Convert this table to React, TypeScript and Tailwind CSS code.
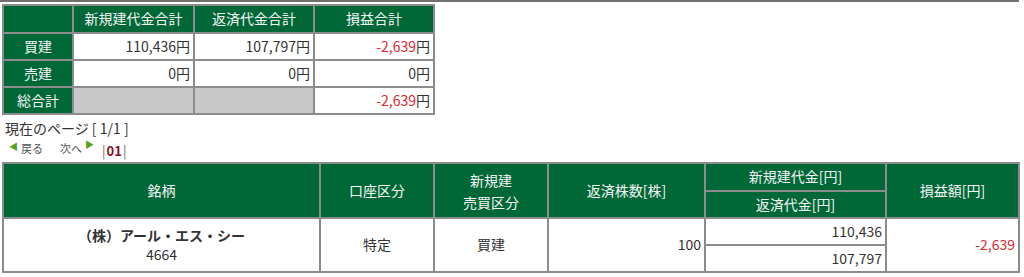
import React from 'react';

const font = { fontFamily: '"Noto Sans CJK JP", "Noto Sans", sans-serif' };

const th = 'bg-[#006837] text-[#f4f4f4] font-normal border-2 border-[#8c8c8c] text-center p-0 leading-tight';
const td = 'bg-white text-[#333] border-2 border-[#8c8c8c] p-0 leading-tight';

const App: React.FC = () => {
    return (
        <div className="w-[1024px] h-[277px] bg-white text-[14px] overflow-hidden" style={font}>
            {/* 上部ライン */}
            <div className="h-[2px] w-[1019px] bg-[#707070]" />

            {/* 合計テーブル */}
            <table className="ml-[2px] mt-[2px] table-fixed border-collapse w-[431px]">
                <colgroup>
                    <col className="w-[70px]" />
                    <col className="w-[121px]" />
                    <col className="w-[120px]" />
                    <col className="w-[120px]" />
                </colgroup>
                <tbody>
                    <tr className="h-[28px]">
                        <th className={th}></th>
                        <th className={th}>新規建代金合計</th>
                        <th className={th}>返済代金合計</th>
                        <th className={th}>損益合計</th>
                    </tr>
                    <tr className="h-[27px]">
                        <th className={th}>買建</th>
                        <td className={`${td} text-right pr-[3px]`}>110,436円</td>
                        <td className={`${td} text-right pr-[3px]`}>107,797円</td>
                        <td className={`${td} text-right pr-[3px]`}><span className="text-[#e0262e]">-2,639</span>円</td>
                    </tr>
                    <tr className="h-[27px]">
                        <th className={th}>売建</th>
                        <td className={`${td} text-right pr-[3px]`}>0円</td>
                        <td className={`${td} text-right pr-[3px]`}>0円</td>
                        <td className={`${td} text-right pr-[3px]`}>0円</td>
                    </tr>
                    <tr className="h-[27px]">
                        <th className={th}>総合計</th>
                        <td className={`${td} !bg-[#c8c8c8]`}></td>
                        <td className={`${td} !bg-[#c8c8c8]`}></td>
                        <td className={`${td} text-right pr-[3px]`}><span className="text-[#e0262e]">-2,639</span>円</td>
                    </tr>
                </tbody>
            </table>

            {/* ページ情報 */}
            <div className="ml-[5px] mt-[4px] text-[14px] leading-[18px] text-[#333]">現在のページ [ 1/1 ]</div>
            <div className="flex items-end ml-[9px] h-[24px] text-[11px] leading-[14px] text-[#555]">
                <div className="flex items-center mb-[6px]">
                    <span className="text-[#5aa01e] text-[9px] mr-[3px] -mt-[2px]">◀</span>
                    <span>戻る</span>
                </div>
                <div className="flex items-start ml-[17px] mb-[6px]">
                    <span>次へ</span>
                    <span className="text-[#5aa01e] text-[9px] ml-[3px] -mt-[3px]">▶</span>
                </div>
                <div className="flex items-center ml-[8px] mb-[2px] text-[13px] leading-[16px]">
                    <span className="text-[#666]">|</span>
                    <span className="font-bold text-[#8b0d1d] mx-[1px]">01</span>
                    <span className="text-[#666]">|</span>
                </div>
            </div>

            {/* 明細テーブル */}
            <table className="ml-[2px] mt-[1px] table-fixed border-collapse w-[1016px]">
                <colgroup>
                    <col className="w-[317px]" />
                    <col className="w-[114px]" />
                    <col className="w-[114px]" />
                    <col className="w-[157px]" />
                    <col className="w-[181px]" />
                    <col className="w-[133px]" />
                </colgroup>
                <tbody>
                    <tr className="h-[28px]">
                        <th rowSpan={2} className={th}>銘柄</th>
                        <th rowSpan={2} className={th}>口座区分</th>
                        <th rowSpan={2} className={th}>
                            <div className="leading-[22px]">新規建</div>
                            <div className="leading-[22px]">売買区分</div>
                        </th>
                        <th rowSpan={2} className={th}>返済株数[株]</th>
                        <th className={th}>新規建代金[円]</th>
                        <th rowSpan={2} className={th}>損益額[円]</th>
                    </tr>
                    <tr className="h-[27px]">
                        <th className={th}>返済代金[円]</th>
                    </tr>
                    <tr className="h-[27px]">
                        <td rowSpan={2} className={`${td} text-center`}>
                            <div className="font-bold leading-[19px]">（株）アール・エス・シー</div>
                            <div className="leading-[19px]">4664</div>
                        </td>
                        <td rowSpan={2} className={`${td} text-center`}>特定</td>
                        <td rowSpan={2} className={`${td} text-center`}>買建</td>
                        <td rowSpan={2} className={`${td} text-right pr-[3px]`}>100</td>
                        <td className={`${td} text-right pr-[3px]`}>110,436</td>
                        <td rowSpan={2} className={`${td} text-right pr-[3px] text-[#e0262e]`}>-2,639</td>
                    </tr>
                    <tr className="h-[27px]">
                        <td className={`${td} text-right pr-[3px]`}>107,797</td>
                    </tr>
                </tbody>
            </table>
        </div>
    );
};

export default App;
